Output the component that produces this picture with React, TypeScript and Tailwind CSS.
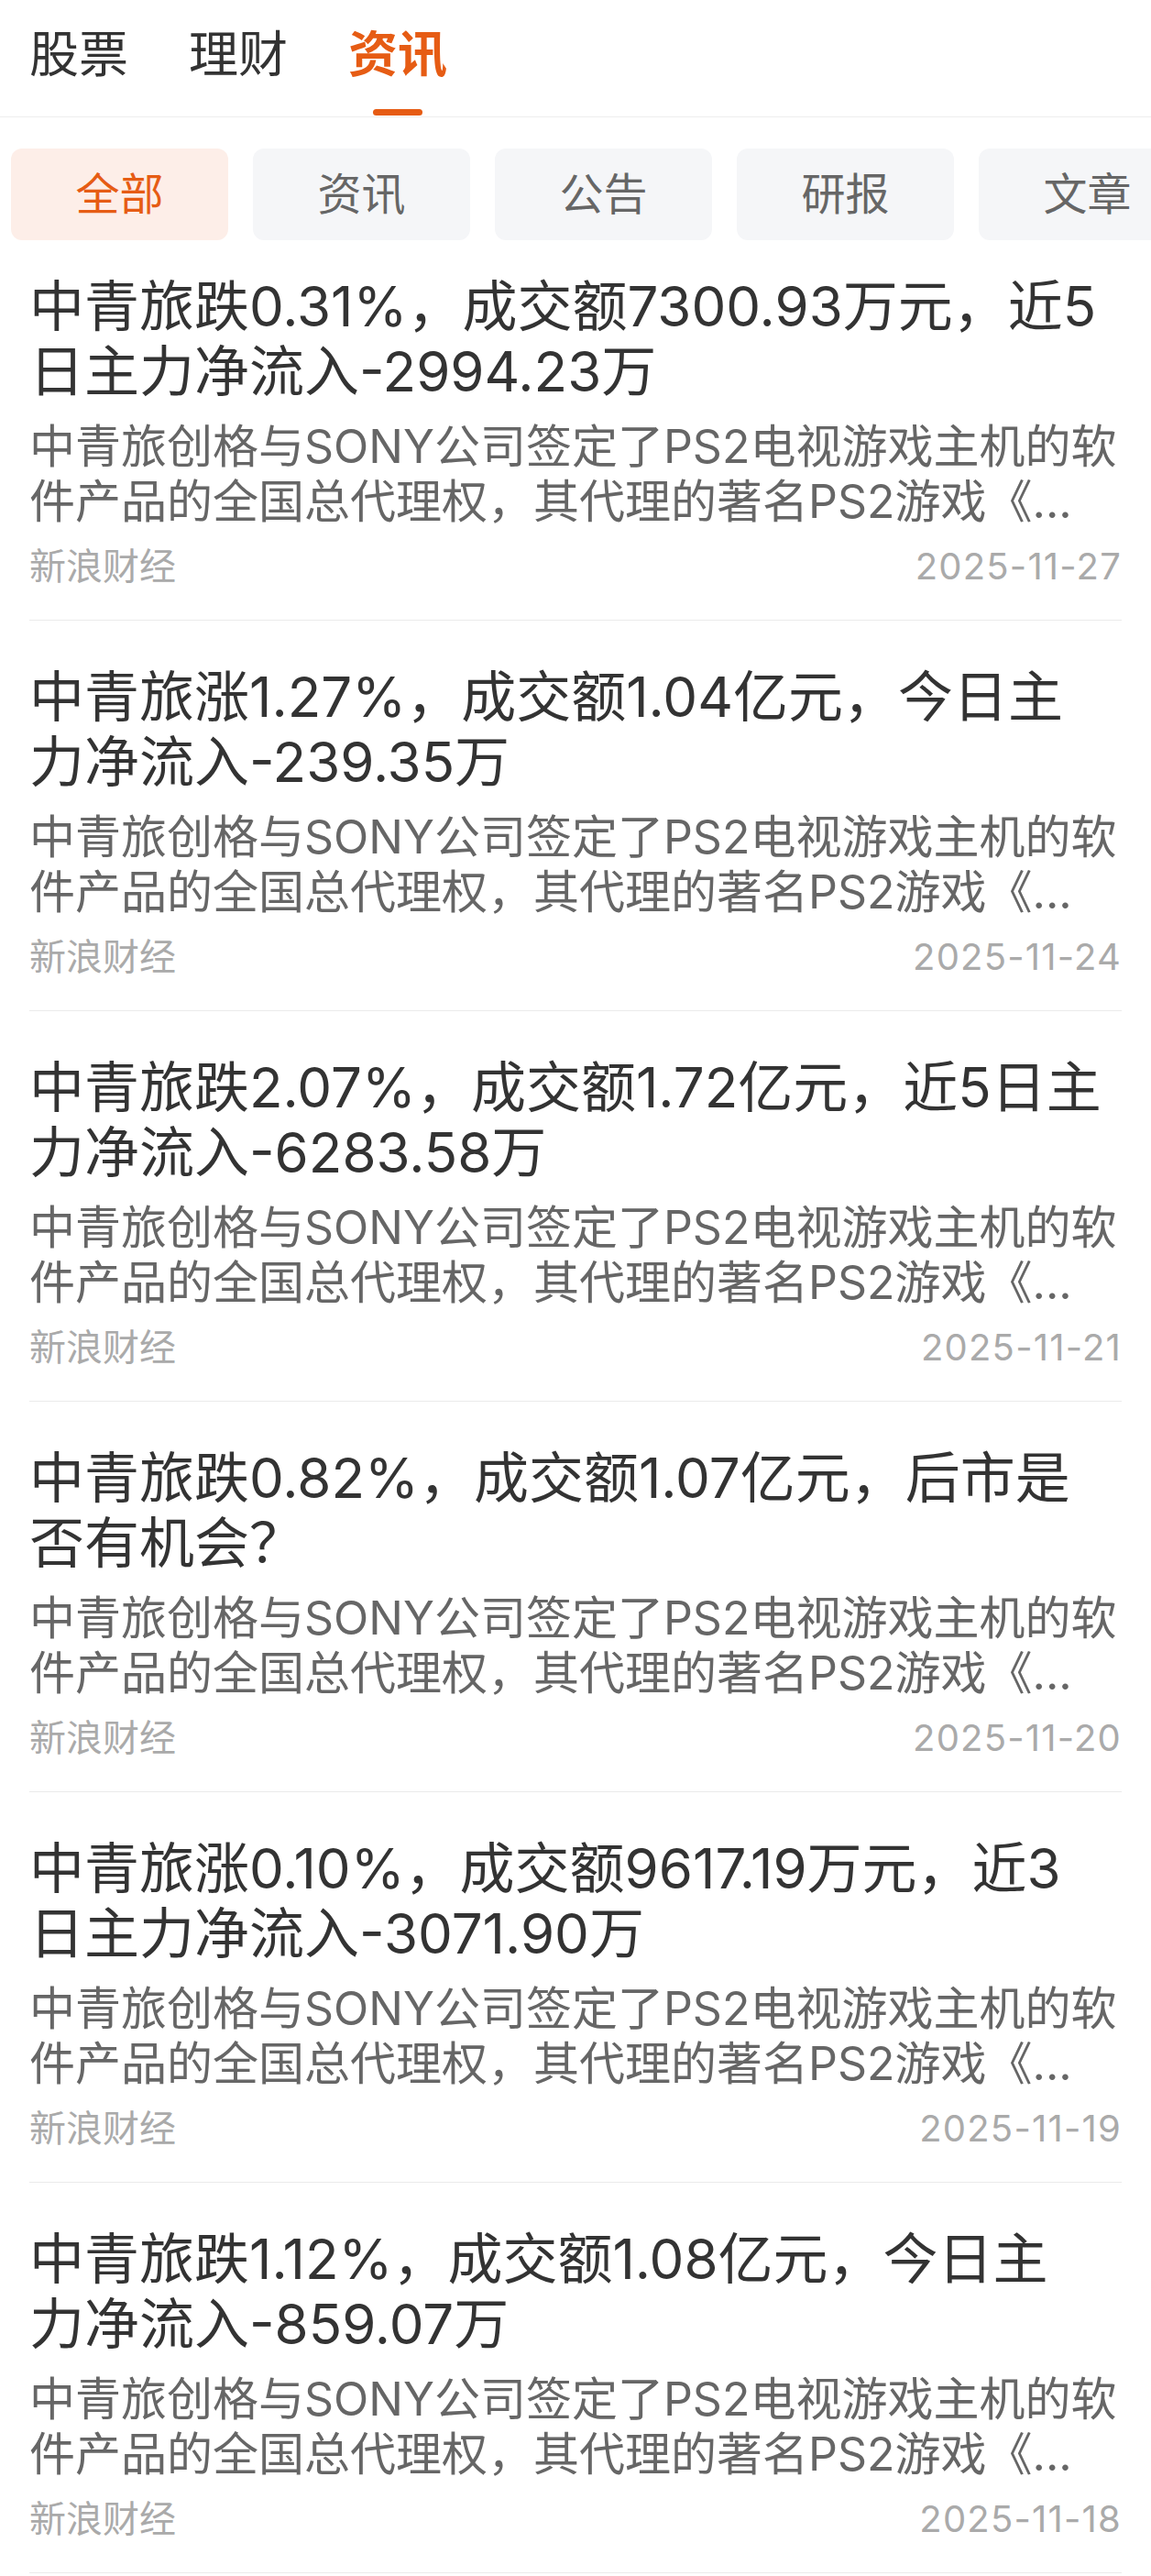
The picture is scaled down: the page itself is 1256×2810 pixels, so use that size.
import { clsx } from "clsx";

const tabs = ["股票", "理财", "资讯"];
const activeTab = "资讯";

const chips = ["全部", "资讯", "公告", "研报", "文章"];

// same summary on every card, cut after two lines
const summary =
  "中青旅创格与SONY公司签定了PS2电视游戏主机的软\n件产品的全国总代理权，其代理的著名PS2游戏《...";

const news = [
  { title: "中青旅跌0.31%，成交额7300.93万元，近5\n日主力净流入-2994.23万", date: "2025-11-27" },
  { title: "中青旅涨1.27%，成交额1.04亿元，今日主\n力净流入-239.35万", date: "2025-11-24" },
  { title: "中青旅跌2.07%，成交额1.72亿元，近5日主\n力净流入-6283.58万", date: "2025-11-21" },
  { title: "中青旅跌0.82%，成交额1.07亿元，后市是\n否有机会？", date: "2025-11-20" },
  { title: "中青旅涨0.10%，成交额9617.19万元，近3\n日主力净流入-3071.90万", date: "2025-11-19" },
  { title: "中青旅跌1.12%，成交额1.08亿元，今日主\n力净流入-859.07万", date: "2025-11-18" },
];

function NewsItem({ title, date }: { title: string; date: string }) {
  return (
    <div className="mx-[32px] border-b border-[#ebebeb] pt-[48px] pb-[34px] first:pt-[37px]">
      <h3 className="whitespace-pre-line text-[60px] font-normal leading-[71px] text-[#333333]">{title}</h3>
      <p className="mt-[16px] whitespace-pre-line text-[50px] leading-[60px] text-[#666666]">{summary}</p>
      <div className="mt-[17px] flex items-center justify-between text-[40px] leading-[48px] text-[#aaaaaa]">
        <span>新浪财经</span>
        <span className="tracking-[1.2px]">{date}</span>
      </div>
    </div>
  );
}

export default function App() {
  return (
    <div className="min-h-screen bg-white font-['Inter','Noto_Sans_CJK_SC',sans-serif]">
      {/* Top tabs */}
      <header className="flex h-[128px] gap-[66px] border-b border-[#eeeeee] px-[32px]">
        {tabs.map((t) => (
          <div key={t} className="relative flex items-center pb-[8px]">
            <span
              className={clsx(
                "text-[54px] leading-none",
                t === activeTab ? "font-bold text-[#e65c14]" : "text-[#333333]"
              )}
            >
              {t}
            </span>
            {t === activeTab && (
              <span className="absolute bottom-[1px] left-1/2 h-[7px] w-[54px] -translate-x-1/2 rounded-full bg-[#e65c14]" />
            )}
          </div>
        ))}
      </header>

      {/* Filter chips */}
      <div className="flex gap-[27px] overflow-hidden pt-[34px] pl-[12px]">
        {chips.map((c, i) => (
          <div
            key={c}
            className={clsx(
              "flex h-[100px] w-[237px] shrink-0 items-center justify-center rounded-[12px] text-[48px]",
              i === 0 ? "bg-[#fdeee8] text-[#e65c14]" : "bg-[#f5f6f8] text-[#666666]"
            )}
          >
            {c}
          </div>
        ))}
      </div>

      {/* News list */}
      <div>
        {news.map((n) => (
          <NewsItem key={n.date} title={n.title} date={n.date} />
        ))}
      </div>
    </div>
  );
}
